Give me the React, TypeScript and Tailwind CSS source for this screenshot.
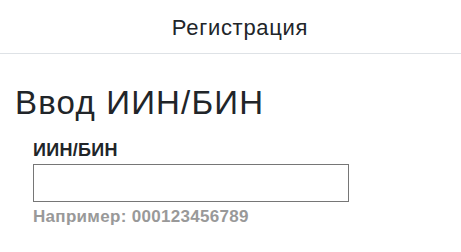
export default function App() {
  return (
    <div className="min-h-screen bg-white text-[#212529] font-['Liberation_Sans',Arial,sans-serif]">
      <header className="h-[54px] border-b border-[#dee2e6] pt-[14px] pl-[19px] flex justify-center">
        <span className="text-[22px] leading-[28px] tracking-[0.7px]">Регистрация</span>
      </header>

      <main className="px-[15px]">
        <h2 className="mt-[29px] text-[33px] leading-[40px] tracking-[1.2px] font-normal">Ввод ИИН/БИН</h2>

        <div className="pl-[18px] mt-[14px]">
          <label htmlFor="iin" className="block text-[18px] leading-[26px] tracking-[0.3px] font-bold">
            ИИН/БИН
          </label>
          <input
            id="iin"
            type="text"
            className="mt-[1px] block w-[316px] h-[38px] border border-[#767676] bg-white px-2 outline-none"
          />
          <p className="mt-[3px] text-[17px] leading-[24px] tracking-[0.3px] font-bold text-[#999999]">
            Например: 000123456789
          </p>
        </div>
      </main>
    </div>
  );
}
